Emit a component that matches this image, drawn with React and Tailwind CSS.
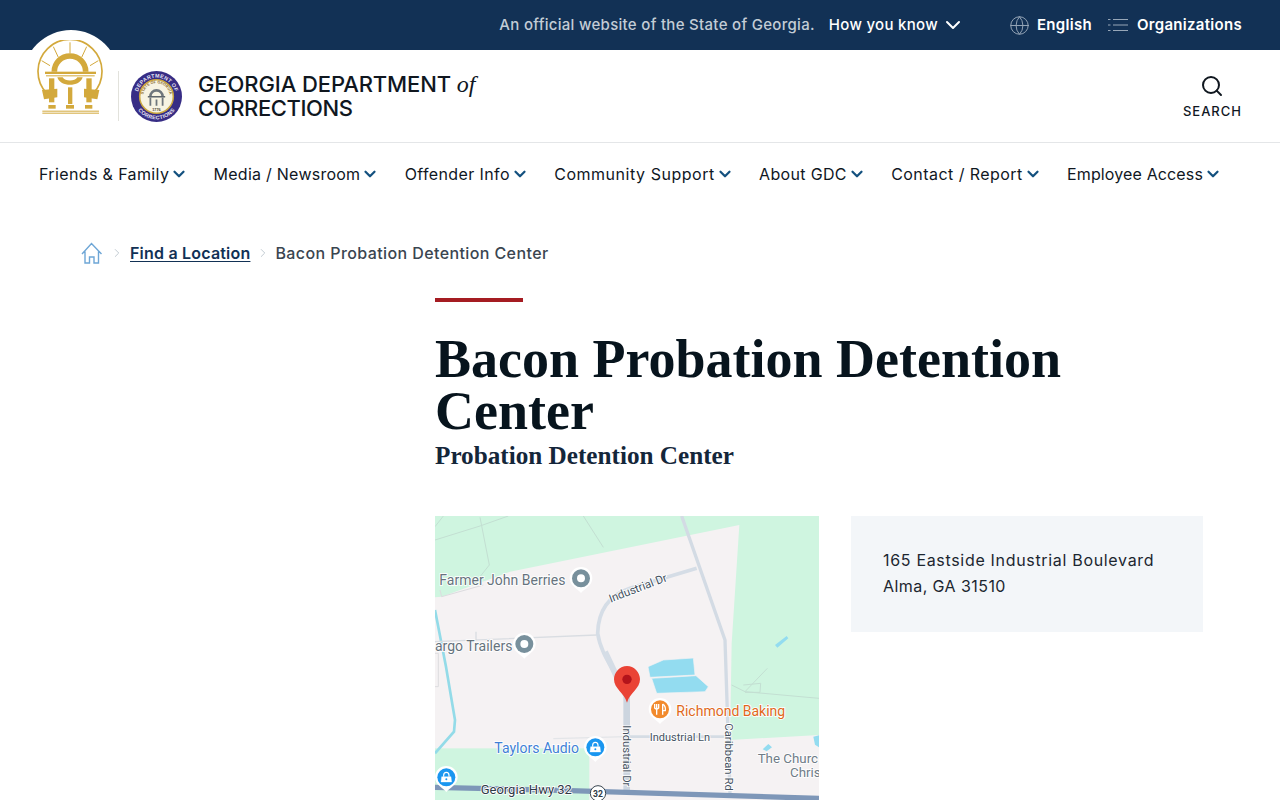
import { ChevronDown, ChevronRight, Globe, Search } from 'lucide-react'

const navItems = [
  { label: 'Friends & Family', spacing: 'tracking-[0.37px]' },
  { label: 'Media / Newsroom', spacing: 'tracking-[0.25px]' },
  { label: 'Offender Info', spacing: 'tracking-[0.38px]' },
  { label: 'Community Support', spacing: 'tracking-[0.53px]' },
  { label: 'About GDC', spacing: 'tracking-[0.33px]' },
  { label: 'Contact / Report', spacing: 'tracking-[0.44px]' },
  { label: 'Employee Access', spacing: 'tracking-[0.13px]' },
]

const GOLD = '#d3a93c'

function ArchLogo() {
  return (
    <svg viewBox="105 120 210 228" className="w-[70px] h-[76px]">
      <path d="M140 280 A96 96 0 1 1 280 280" fill="none" stroke={GOLD} strokeWidth="5" />
      <path d="M163 215 A47 47 0 0 1 257 215" fill="none" stroke={GOLD} strokeWidth="17" />
      <path d="M175 172 L160 140 M210 160 L210 127 M245 172 L260 140 M150 197 L125 182 M270 197 L295 182" stroke={GOLD} strokeWidth="3" />
      <rect x="135" y="215" width="153" height="7" fill={GOLD} />
      <rect x="138" y="226" width="146" height="3" fill={GOLD} />
      <path d="M172 232 C180 262 240 262 248 232 L232 232 C225 245 195 245 188 232 Z" fill={GOLD} />
      <rect x="147" y="235" width="16" height="72" fill={GOLD} />
      <rect x="204" y="262" width="13" height="50" fill={GOLD} />
      <rect x="259" y="235" width="16" height="72" fill={GOLD} />
      <path d="M126 270 L172 266 L172 292 L132 298 Z" fill={GOLD} />
      <path d="M298 270 L252 266 L252 292 L292 298 Z" fill={GOLD} />
      <rect x="145" y="315" width="22" height="11" fill={GOLD} />
      <rect x="198" y="315" width="24" height="11" fill={GOLD} />
      <rect x="255" y="315" width="22" height="11" fill={GOLD} />
      <rect x="127" y="332" width="170" height="3" fill={GOLD} />
      <rect x="127" y="338" width="170" height="3" fill={GOLD} />
    </svg>
  )
}

function Seal() {
  return (
    <svg viewBox="0 0 100 100" className="w-[51px] h-[51px]">
      <defs>
        <path id="sealTop" d="M13 50 A37 37 0 0 1 87 50" />
        <path id="sealBottom" d="M5 50 A45 45 0 0 0 95 50" />
        <path id="sealInner" d="M24 50 A26 26 0 0 1 76 50" />
      </defs>
      <circle cx="50" cy="50" r="50" fill="#372d85" />
      <circle cx="50" cy="50" r="33" fill="#f7f3e2" stroke="#c9a53f" strokeWidth="3" />
      <text fontSize="10.5" fill="#e9e6f5" fontFamily="Liberation Sans" fontWeight="700" letterSpacing="0.6">
        <textPath href="#sealTop" startOffset="50%" textAnchor="middle">DEPARTMENT OF</textPath>
      </text>
      <text fontSize="10.5" fill="#e9e6f5" fontFamily="Liberation Sans" fontWeight="700" letterSpacing="0.6">
        <textPath href="#sealBottom" startOffset="50%" textAnchor="middle">CORRECTIONS</textPath>
      </text>
      <text fontSize="7.5" fill="#8c6a2c" fontFamily="Liberation Sans" fontWeight="700">
        <textPath href="#sealInner" startOffset="50%" textAnchor="middle">STATE OF GEORGIA</textPath>
      </text>
      <path d="M38 50 A12 12 0 0 1 62 50" fill="none" stroke="#6f767c" strokeWidth="5" />
      <rect x="33" y="49" width="34" height="3" fill="#5f666c" />
      <path d="M38 52 V68 M50 56 V68 M62 52 V68" stroke="#6f767c" strokeWidth="3.5" />
      <text x="50" y="78" fontSize="7.5" fontWeight="700" textAnchor="middle" fill="#4a4030" fontFamily="Liberation Sans">1776</text>
    </svg>
  )
}

function MapPoi({ x, y, fill, children }) {
  return (
    <g>
      <path d={`M${x - 34} ${y} A34 34 0 1 1 ${x + 34} ${y} C${x + 34} ${y + 22} ${x + 12} ${y + 30} ${x} ${y + 44} C${x - 12} ${y + 30} ${x - 34} ${y + 22} ${x - 34} ${y} Z`} fill="#fff" />
      <circle cx={x} cy={y} r="27" fill={fill} />
      {children}
    </g>
  )
}

function BagIcon({ x, y }) {
  return (
    <g fill="none" stroke="#fff">
      <path d={`M${x - 8} ${y - 2} V${y - 6} A8 9 0 0 1 ${x + 8} ${y - 6} V${y - 2}`} strokeWidth="3.5" />
      <path d={`M${x - 14} ${y - 2} H${x + 14} L${x + 16} ${y + 14} H${x - 16} Z`} fill="#fff" strokeWidth="1" />
      <circle cx={x} cy={y + 6} r="3" fill="#1a96f0" stroke="none" />
    </g>
  )
}

function MapLabel({ x, y, fill = '#66737d', size = 42, anchor = 'start', rotate, children }) {
  return (
    <text
      x={x}
      y={y}
      fontSize={size}
      fill={fill}
      textAnchor={anchor}
      fontFamily="Roboto, sans-serif"
      stroke="#fff"
      strokeWidth="5"
      paintOrder="stroke"
      transform={rotate ? `rotate(${rotate} ${x} ${y})` : undefined}
    >
      {children}
    </text>
  )
}

function LocationMap() {
  return (
    <svg viewBox="15 18 1152 852" className="block w-[384px] h-[284px]">
      <rect x="15" y="18" width="1152" height="852" fill="#cff5e0" />
      {/* land */}
      <path d="M928 45 L905 400 L900 690 L1167 675 L1167 870 L15 870 L15 262 L35 260 L240 185 Z" fill="#f5f2f3" />
      <rect x="15" y="715" width="463" height="155" fill="#cff5e0" />
      {/* thin tracks in the green */}
      <path d="M15 90 L150 48 L235 18 M150 22 L178 165 L150 200 M460 18 L520 112 M15 50 L40 18" fill="none" stroke="#c3dfd2" strokeWidth="3" />
      <path d="M905 525 L945 545 L1012 475 M945 545 L1167 565 M940 525 L992 520 L990 547 L945 547" fill="none" stroke="#c3dfd2" strokeWidth="3" />
      <path d="M30 240 L35 260 L160 225" fill="none" stroke="#dcdcdf" strokeWidth="3" />
      {/* river */}
      <path d="M15 300 L48 470 L75 630 L72 665 L15 730" fill="none" stroke="#93dbe8" strokeWidth="8" />
      <path d="M15 430 L25 430 L25 530 L15 530" fill="none" stroke="#dcdcdf" strokeWidth="3" />
      {/* roads */}
      <path d="M15 395 L500 375 M138 365 L138 390" fill="none" stroke="#d9dde2" strokeWidth="4" />
      <path d="M800 175 L600 235 C540 255 505 300 503 370 C510 420 535 460 560 495" fill="none" stroke="#d5dde6" strokeWidth="11" />
      <path d="M590 560 L590 850" fill="none" stroke="#ccd5df" strokeWidth="20" />
      <path d="M525 425 Q555 490 590 560" fill="none" stroke="#d5dde6" strokeWidth="18" />
      <path d="M755 18 L885 390 L900 850" fill="none" stroke="#d3dbe4" strokeWidth="10" />
      <path d="M370 686 L590 680" fill="none" stroke="#e3e5e8" strokeWidth="4" />
      <path d="M590 680 L905 680" fill="none" stroke="#d5dce4" strokeWidth="8" />
      <path d="M15 832 L420 842 L1167 865" fill="none" stroke="#7e97b8" strokeWidth="16" />
      {/* water */}
      <path d="M654 470 L700 450 L790 444 L795 495 L660 502 Z M665 505 L798 497 L835 530 L825 545 L680 550 Z" fill="#93dcf0" stroke="#f5f2f3" strokeWidth="2" />
      <path d="M1035 405 L1070 378 L1075 385 L1042 413 Z M998 718 L1015 702 L1026 712 L1010 724 Z M1150 680 L1167 676 L1167 712 L1155 704 Z" fill="#93dcf0" />

      <MapLabel x="28" y="225">Farmer John Berries</MapLabel>
      <MapPoi x={453} y={205} fill="#78909c"><circle cx="453" cy="205" r="12" fill="#fff" /></MapPoi>
      <MapLabel x="15" y="423">argo Trailers</MapLabel>
      <MapPoi x={283} y={402} fill="#78909c"><circle cx="283" cy="402" r="12" fill="#fff" /></MapPoi>

      <MapLabel x="542" y="278" size="34" fill="#45525f" rotate="-21">Industrial Dr</MapLabel>
      <MapLabel x="659" y="692" size="33" fill="#45525f">Industrial Ln</MapLabel>
      <MapLabel x="578" y="646" size="34" fill="#45525f" rotate="90">Industrial Dr</MapLabel>
      <MapLabel x="886" y="640" size="34" fill="#45525f" rotate="90">Caribbean Rd</MapLabel>

      <MapLabel x="739" y="617" fill="#e0681b">Richmond Baking</MapLabel>
      <MapPoi x={690} y={598} fill="#f28a2c">
        <path d="M680 582 V598 M674 582 V594 Q680 600 686 594 V582 M680 598 V614 M698 582 V614 M698 582 Q708 588 706 602 L698 602" fill="none" stroke="#fff" strokeWidth="4" />
      </MapPoi>
      <MapLabel x="193" y="729" fill="#3f7fd6">Taylors Audio</MapLabel>
      <MapPoi x={496} y={712} fill="#1a96f0"><BagIcon x={496} y={712} /></MapPoi>
      <MapPoi x={49} y={802} fill="#1a96f0"><BagIcon x={49} y={802} /></MapPoi>
      <MapLabel x="983" y="758" size="40" fill="#6f7c87">The Churc</MapLabel>
      <MapLabel x="1080" y="801" size="40" fill="#6f7c87">Chris</MapLabel>
      <MapLabel x="152" y="852" size="39" fill="#2e3a46">Georgia Hwy 32</MapLabel>
      <circle cx="504" cy="850" r="23" fill="#fff" stroke="#3a4650" strokeWidth="3" />
      <text x="504" y="860" fontSize="26" fontWeight="700" textAnchor="middle" fill="#2e3a46" fontFamily="Roboto, sans-serif">32</text>

      {/* red pin */}
      <path d="M591 468 C612 468 630 486 630 508 C630 536 600 548 591 578 C582 548 552 536 552 508 C552 486 570 468 591 468 Z" fill="#ea4335" />
      <circle cx="591" cy="508" r="14" fill="#b3141b" />
    </svg>
  )
}

export default function App() {
  return (
    <div className="h-[800px] overflow-hidden bg-white font-['Inter',sans-serif] text-[#10171f]">
      {/* state banner */}
      <div className="relative h-[50px] bg-[#123155] flex items-center justify-end pr-[38px] text-[15px] font-medium tracking-[0.3px]">
        <span className="text-[#c3ccd6] mr-[14px]">An official website of the State of Georgia.</span>
        <span className="text-white">How you know</span>
        <ChevronDown className="w-6 h-6 ml-[3px] mr-[44px] text-white" strokeWidth={2} />
        <Globe className="w-[21px] h-[21px] text-[#97a7b8] mr-[7px]" strokeWidth={1.1} />
        <span className="text-white font-semibold mr-[16px]">English</span>
        <svg viewBox="0 0 20 16" className="w-5 h-4 mr-[9px] text-[#97a7b8]" fill="none" stroke="currentColor">
          <path d="M5 2.5 H20 M5 8 H20 M5 13.5 H20 M0 2.5 H2.5 M0 8 H2.5 M0 13.5 H2.5" />
        </svg>
        <span className="text-white font-semibold">Organizations</span>
        <div className="absolute left-[23px] top-[30px] w-24 h-24 rounded-full bg-white" />
      </div>

      {/* agency header */}
      <div className="relative h-[93px] border-b border-[#e4e6e8] flex items-center pl-[35px] pr-[38px]">
        <div className="relative -mt-[36px]"><ArchLogo /></div>
        <div className="w-px h-[50px] bg-[#e2e2dc] ml-[13px] mr-[12px]" />
        <Seal />
        <div className="ml-[16px] -mt-[1px] text-[22px] leading-[24px] font-medium">
          <div className="tracking-[-0.1px]">GEORGIA DEPARTMENT <span className="font-['Liberation_Serif',serif] italic text-[24px]">of</span></div>
          <div className="tracking-[-0.4px]">CORRECTIONS</div>
        </div>
        <div className="ml-auto flex flex-col items-center">
          <Search className="w-6 h-6 mb-[6px] translate-y-[1px]" strokeWidth={2} />
          <span className="text-[13px] leading-4 font-medium tracking-[1px]">SEARCH</span>
        </div>
      </div>

      {/* main nav */}
      <nav className="h-[62px] flex items-center gap-[25.33px] pl-[39px] text-[16px]">
        {navItems.map(item => (
          <div key={item.label} className="flex items-center gap-[1px]">
            <span className={item.spacing}>{item.label}</span>
            <ChevronDown className="w-[18px] h-[18px] text-[#14517f]" strokeWidth={3} />
          </div>
        ))}
      </nav>

      {/* breadcrumb */}
      <div className="mt-[34px] pl-[81px] flex items-center h-[28px] text-[16px] font-medium">
        <svg viewBox="0 0 22 22" className="w-[22px] h-[22px] text-[#6ea6d6]" fill="none" stroke="currentColor" strokeWidth="1.4">
          <path d="M1 12 L10.5 1.5 L20.5 12 M4 9.5 V21 H8.5 V15 H13 V21 H17.5 V9.5" />
        </svg>
        <ChevronRight className="w-[14px] h-[14px] text-[#b9c3cc] ml-[7px] mr-[6px]" strokeWidth={1.5} />
        <a href="#" className="font-semibold text-[#123155] underline underline-offset-2 tracking-[0.2px]">Find a Location</a>
        <ChevronRight className="w-[14px] h-[14px] text-[#b9c3cc] ml-[6px] mr-[5px]" strokeWidth={1.5} />
        <span className="text-[#3a4550] tracking-[0.4px]">Bacon Probation Detention Center</span>
      </div>

      {/* page content */}
      <div className="ml-[435px] w-[768px] mt-[31px]">
        <div className="w-[88px] h-1 bg-[#a51c22]" />
        <h1 className="mt-[31px] text-[54px] leading-[52px] font-bold text-[#07141d] font-['Liberation_Serif',serif]">
          Bacon Probation Detention Center
        </h1>
        <h2 className="mt-[3px] text-[25.2px] leading-[32px] font-bold text-[#14263a] font-['Liberation_Serif',serif]">
          Probation Detention Center
        </h2>
        <div className="mt-[44px] grid grid-cols-[384px_352px] gap-[32px] items-start">
          <LocationMap />
          <div className="bg-[#f3f6f9] px-[32px] pt-[31px] h-[116px] text-[16px] leading-[26px] text-[#1c2630]">
            <div className="tracking-[0.68px]">165 Eastside Industrial Boulevard</div>
            <div className="tracking-[0.43px]">Alma, GA 31510</div>
          </div>
        </div>
      </div>
    </div>
  )
}
